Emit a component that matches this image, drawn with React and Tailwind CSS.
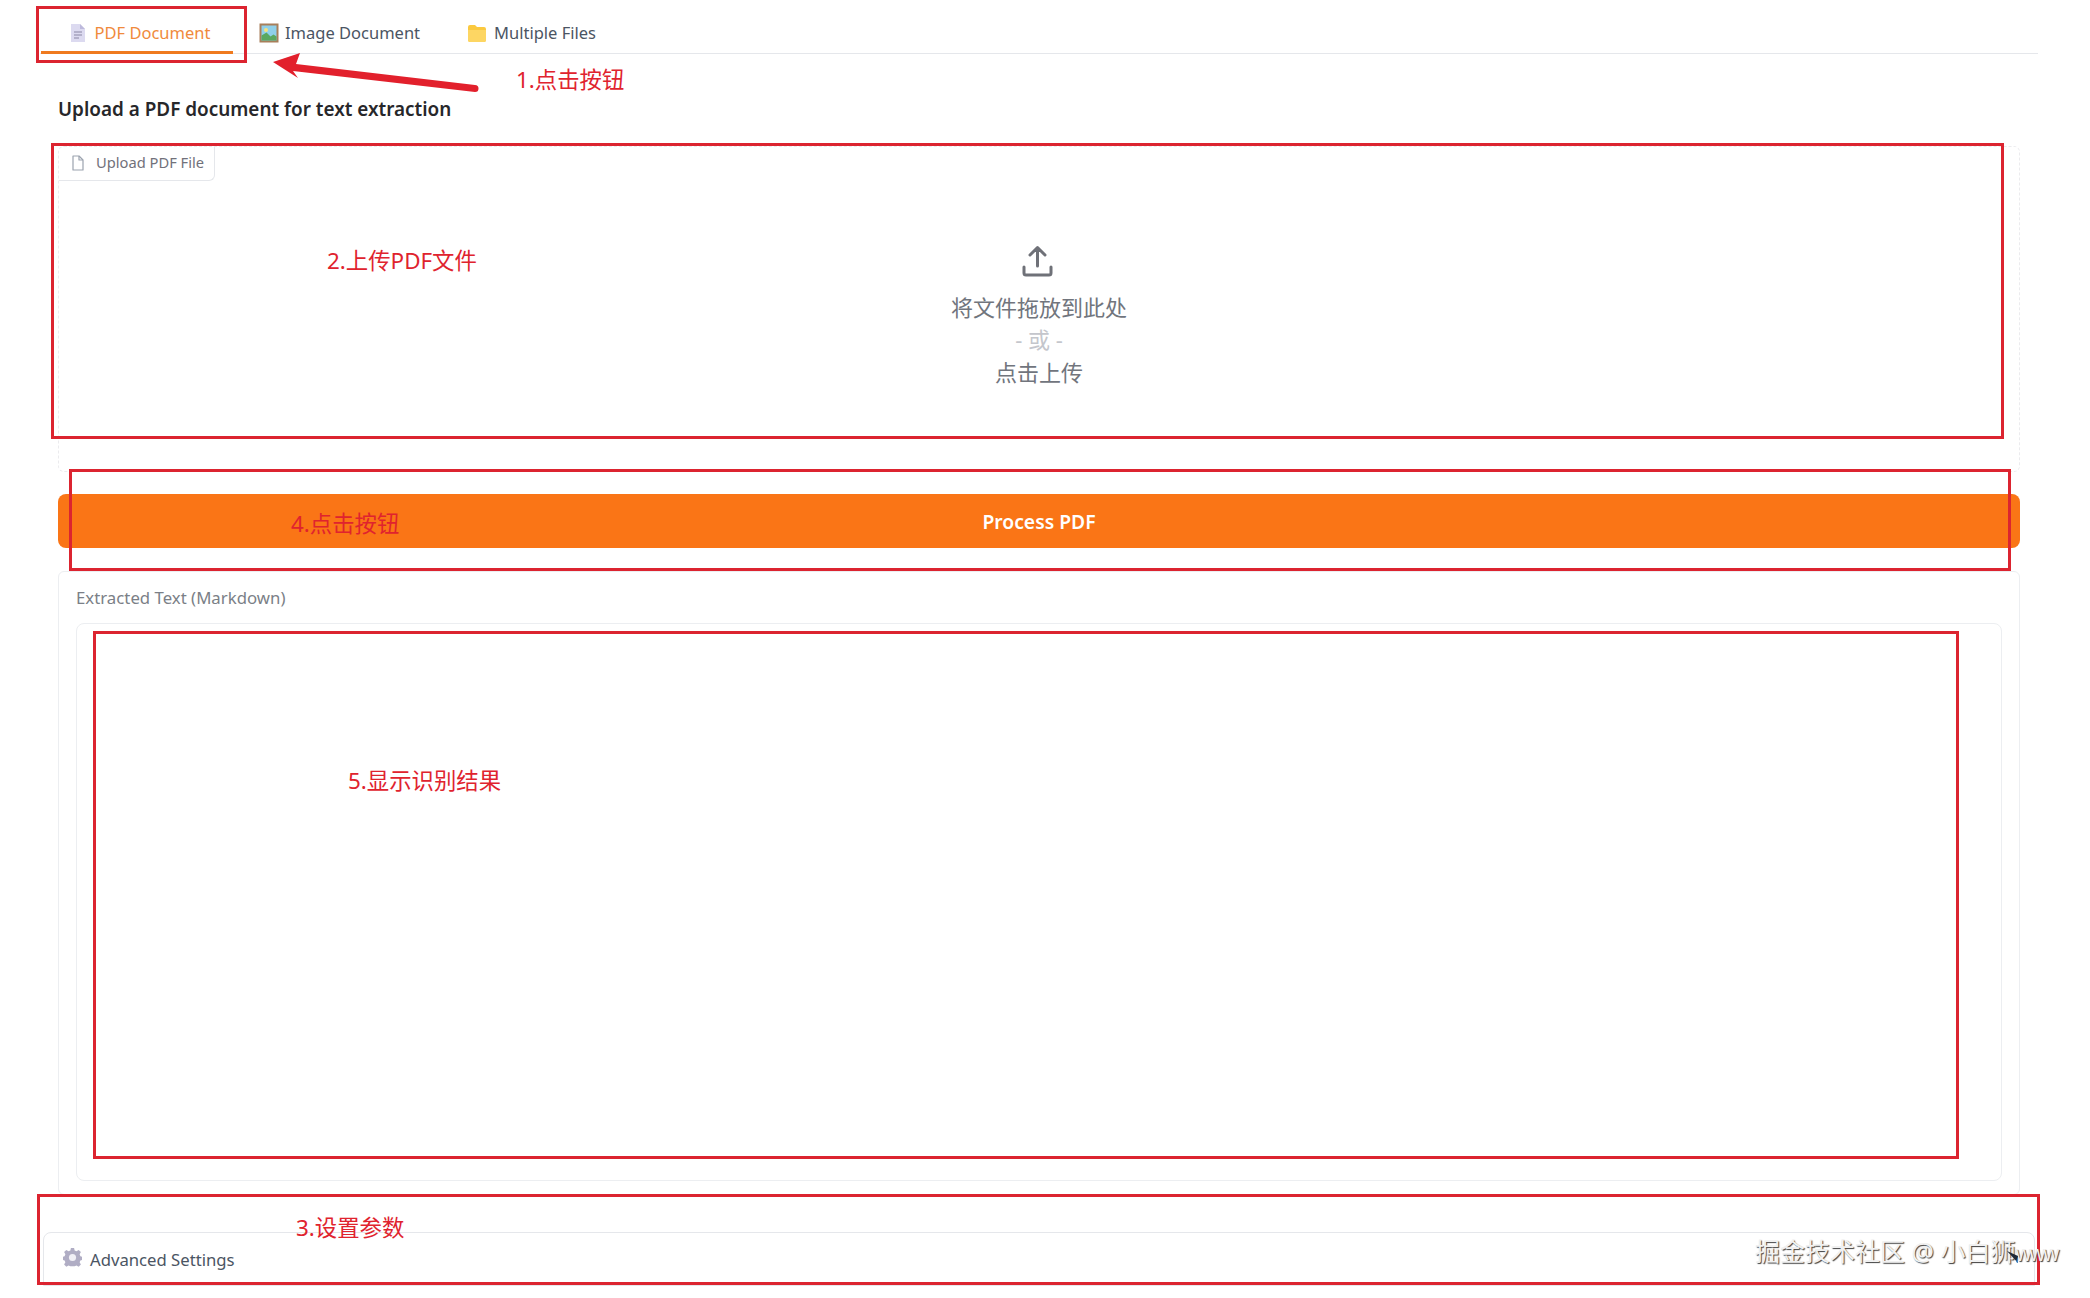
const sans = { fontFamily: '"Noto Sans", "Noto Sans CJK SC", sans-serif' };

function DocEmoji() {
  return (
    <svg width="17" height="20" viewBox="0 0 17 20">
      <path d="M2 1h9l5 5v13H2z" fill="#dcdaf0" />
      <path d="M11 1l5 5h-5z" fill="#bdb9dc" />
      <path d="M5 9h8M5 12h8M5 15h5" stroke="#a5a2bd" strokeWidth="1.4" />
    </svg>
  );
}
function PictureEmoji() {
  return (
    <svg width="20" height="20" viewBox="0 0 20 20">
      <rect x="0.5" y="0.5" width="19" height="19" fill="#a87f5a" />
      <rect x="2.5" y="2.5" width="15" height="15" fill="#8fd0ea" />
      <circle cx="7" cy="7" r="2" fill="#f7e27c" />
      <path d="M2.5 17.5v-5l5-3 4 4 3-2 3 2v4z" fill="#5aa860" />
    </svg>
  );
}
function FolderEmoji() {
  return (
    <svg width="20" height="18" viewBox="0 0 20 18">
      <path d="M1 3a2 2 0 0 1 2-2h5l2 2h7a2 2 0 0 1 2 2v11a2 2 0 0 1-2 2H3a2 2 0 0 1-2-2z" fill="#fbc93f" />
      <path d="M1 6h18v10a2 2 0 0 1-2 2H3a2 2 0 0 1-2-2z" fill="#fdd663" />
    </svg>
  );
}
function GearEmoji() {
  return (
    <svg width="19" height="19" viewBox="0 0 24 24">
      <path
        d="M10 1h4l.7 3.2 2.300 1 2.800-1.800 2.800 2.800L21 9l1 2.300 2 .7v4l-2 .7-1 2.300 1.600 2.800-2.800 2.800L17 23l-2.300 1h-5.400L7 23l-2.800 1.600L1.400 21.800 3 19l-1-2.300L0 16v-4l2-.7 1-2.300L1.400 6.200 4.200 3.400 7 5l2.300-1z"
        fill="#b0adc4"
        transform="translate(0 -1)"
      />
      <circle cx="12" cy="12" r="4.500" fill="#f1f0f6" />
    </svg>
  );
}

function Tab({ icon, label, active, className }) {
  return (
    <div
      className={`flex h-[54px] items-center justify-center border-b-[3px] pt-[15px] text-[16.5px] ${
        active ? 'border-[#ef7a1f] text-[#f08a3c]' : 'border-transparent text-[#4b5563]'
      } ${className}`}
    >
      {icon}
      <span>{label}</span>
    </div>
  );
}

function Note({ className, children }) {
  return (
    <div className={`absolute whitespace-nowrap text-[22.4px] leading-[30px] text-[#e0232e] ${className}`}>{children}</div>
  );
}

function RedBox({ className }) {
  return <div className={`absolute border-[3px] border-[#dc2430] ${className}`} />;
}

export default function App() {
  return (
    <div style={sans} className="relative h-[1298px] w-full overflow-hidden bg-white pl-[40px] pr-[52px]">
      <div className="flex h-[54px] border-b border-[#e5e7eb] pl-[1px]">
        <Tab active icon={<DocEmoji />} label="PDF Document" className="w-[192px] gap-[9px] pl-[5px]" />
        <Tab icon={<PictureEmoji />} label="Image Document" className="ml-[26px] gap-[6px]" />
        <Tab icon={<FolderEmoji />} label="Multiple Files" className="ml-[47px] gap-[7px]" />
      </div>

      <div className="px-[18px]">
        <h2 className="pt-[41px] text-[18.9px] font-semibold leading-[28px] text-[#27272a]">
          Upload a PDF document for text extraction
        </h2>

        <div className="mt-[23px] flex h-[326px] flex-col rounded-[6px] border border-dashed border-[#ebebee]">
          <div className="flex h-[34px] w-[156px] items-center gap-[11px] rounded-br-[6px] border-b border-r border-[#e5e7eb] pb-[2px] pl-[12px] text-[14.7px] text-[#71717a]">
            <svg width="14" height="16" viewBox="0 0 14 16" fill="none" stroke="#9ca3af" strokeWidth="1.200">
              <path d="M2 1h6l4 4v10H2z" strokeLinejoin="round" />
              <path d="M8 1v4h4" strokeLinejoin="round" />
            </svg>
            <span>Upload PDF File</span>
          </div>
          <div className="mt-[64px] flex flex-col items-center text-[22px] text-[#71757d]">
            <svg width="32" height="32" viewBox="0 0 32 32" fill="none" stroke="#6f7178" strokeWidth="3" strokeLinecap="round" strokeLinejoin="round" className="-ml-[3px]">
              <path d="M15.500 21V3M8 10l7.500-7.500L23 10" />
              <path d="M2 22v6a2 2 0 0 0 2 2h23a2 2 0 0 0 2-2v-6" />
            </svg>
            <div className="mt-[14px] leading-[32px]">将文件拖放到此处</div>
            <div className="leading-[32px] text-[#c4c6cc]">- 或 -</div>
            <div className="mt-[1px] leading-[33px]">点击上传</div>
          </div>
        </div>

        <button className="mt-[22px] block h-[54px] w-full rounded-[8px] bg-[#fa7516] pt-[3px] text-[19.3px] font-semibold text-white">
          Process PDF
        </button>

        <div className="mt-[23px] h-[624px] rounded-[6px] border border-[#eceef1] px-[17px]">
          <div className="flex h-[51px] items-center text-[16.8px] text-[#7b7f87]">Extracted Text (Markdown)</div>
          <div className="h-[558px] rounded-[8px] border border-[#eceef1]" />
        </div>

        <div className="-mx-[15px] mt-[37px] flex h-[54px] items-start gap-[8px] rounded-t-[8px] border border-[#e5e7eb] pl-[19px] pt-[15px] text-[16.7px] leading-[24px] text-[#4b5563]">
          <GearEmoji />
          <span>Advanced Settings</span>
        </div>
      </div>

      <RedBox className="left-[36px] top-[6px] h-[57px] w-[211px]" />
      <RedBox className="left-[51px] top-[143px] h-[296px] w-[1953px]" />
      <RedBox className="left-[69px] top-[469px] h-[102px] w-[1942px]" />
      <RedBox className="left-[93px] top-[631px] h-[528px] w-[1866px]" />
      <RedBox className="left-[37px] top-[1194px] h-[91px] w-[2003px]" />

      <svg className="absolute left-[270px] top-[50px]" width="212" height="46" viewBox="0 0 212 46">
        <path d="M3 12L30 3l-4 11L205 35a3.500 3.500 0 0 1 0 7L23 21l5 7z" fill="#e2202c" />
      </svg>

      <Note className="left-[516px] top-[65px]">1.点击按钮</Note>
      <Note className="left-[327px] top-[246px]">2.上传PDF文件</Note>
      <Note className="left-[291px] top-[509px]">4.点击按钮</Note>
      <Note className="left-[348px] top-[766px]">5.显示识别结果</Note>
      <Note className="left-[296px] top-[1213px]">3.设置参数</Note>

      <div className="absolute left-[1755px] top-[1233px] flex items-baseline whitespace-nowrap text-[25px] leading-[36px] text-[#f1f1f1] [text-shadow:1px_1px_1px_#3f3f3f]">
        <span>掘金技术社区 @ 小白狮</span>
        <span className="text-[22px] tracking-[-2px] [font-family:'Liberation_Sans',sans-serif]">www</span>
      </div>
      <svg className="absolute left-[2006px] top-[1250px]" width="14" height="14" viewBox="0 0 14 14">
        <path d="M1 1l11 5v7z" fill="#1f2937" />
        <path d="M12 6v7l-2-1z" fill="#3b82c4" />
      </svg>
    </div>
  );
}
